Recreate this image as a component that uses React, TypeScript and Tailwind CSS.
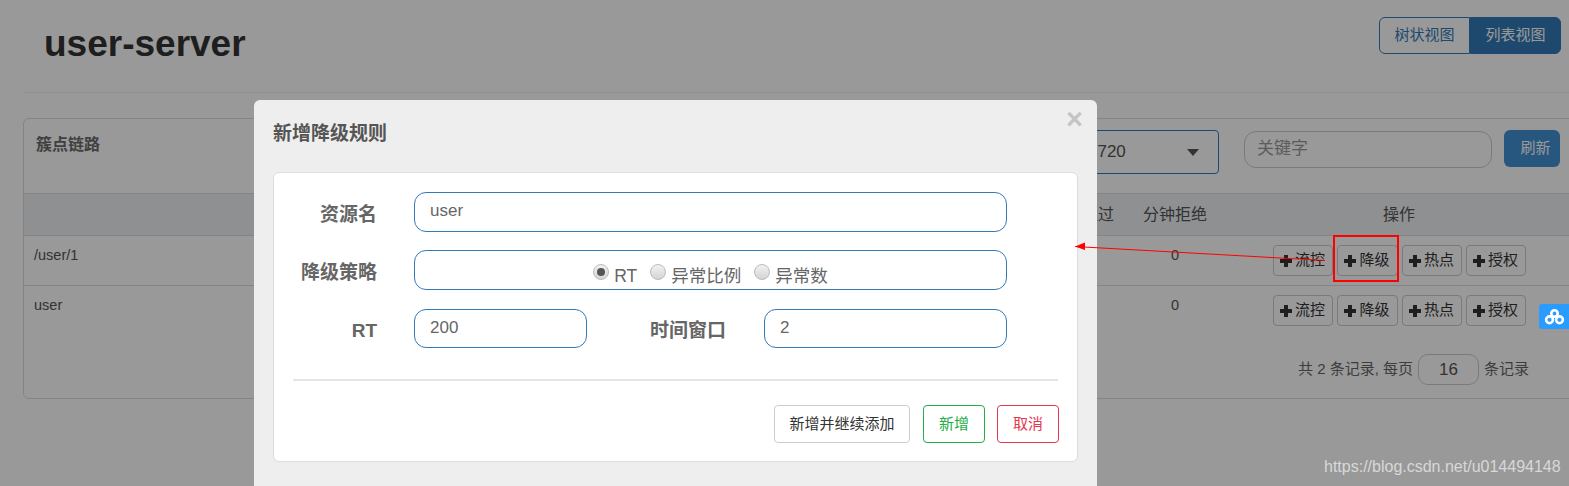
import React from "react";

const fontStack = "font-['Liberation_Sans','Noto_Sans_CJK_SC',sans-serif]";

function PlusGlyph() {
  return (
    <svg viewBox="0.5 0.5 11 11" className="h-[12px] w-[12px] shrink-0" fill="#333">
      <path d="M4.2 0.5h3.6v3.7h3.7v3.6h-3.7v3.7h-3.6v-3.7h-3.7v-3.6h3.7z" />
    </svg>
  );
}

function OpButton({ label, width }: { label: string; width: string }) {
  return (
    <button className={`flex h-[31px] ${width} items-center justify-center gap-[3px] rounded-[4px] border border-[#ccc] bg-white text-[15px] text-[#333]`}>
      <PlusGlyph />
      <span>{label}</span>
    </button>
  );
}

function TableRow({ name, last }: { name: string; last?: boolean }) {
  return (
    <div className={`flex h-[50px] pr-[33px] text-[14.5px] text-[#555] ${last ? "" : "border-b border-[#ddd]"}`}>
      <div className="flex-1 pt-[9px] pl-[10px]">{name}</div>
      <div className="w-[86px] pt-[9px] text-center">0</div>
      <div className="ml-[31px] flex w-[300px] justify-center gap-[4px] pt-[9px]">
        <OpButton label="流控" width="w-[60px]" />
        <OpButton label="降级" width="w-[61px]" />
        <OpButton label="热点" width="w-[60px]" />
        <OpButton label="授权" width="w-[60px]" />
      </div>
    </div>
  );
}

function FormLabel({ children, className }: { children: React.ReactNode; className?: string }) {
  return (
    <label className={`pt-[4px] text-right text-[19px] leading-none font-bold whitespace-nowrap text-[#666] ${className ?? ""}`}>
      {children}
    </label>
  );
}

function Radio({ label, checked }: { label: string; checked?: boolean }) {
  return (
    <span className="flex items-center gap-[5px]">
      <span className="mt-[-8px] flex h-[16px] w-[16px] items-center justify-center rounded-full border border-[#bbb] bg-gradient-to-b from-[#f2f2f2] to-[#d4d4d4]">
        {checked && <span className="h-[8px] w-[8px] rounded-full bg-[#555]" />}
      </span>
      <span>{label}</span>
    </span>
  );
}

function TextField({ value, className }: { value: string; className: string }) {
  return (
    <input
      readOnly
      value={value}
      className={`rounded-[12px] border border-[#337ab7] bg-white px-[15px] text-[17px] text-[#666] outline-none ${className}`}
    />
  );
}

export default function App() {
  return (
    <div className={`relative h-[486px] w-[1569px] overflow-hidden bg-white ${fontStack}`}>
      {/* page behind the modal */}
      <header className="ml-[23px] flex h-[93px] justify-between border-b border-[#eee] pr-[8px] pl-[21px]">
        <h1 className="mt-[21px] text-[37px] leading-[46px] font-bold text-[#333]">user-server</h1>
        <div className="mt-[17px] flex h-[37px] text-[15px]">
          <button className="h-full w-[91px] rounded-l-[6px] border border-[#337ab7] bg-white text-[#337ab7]">树状视图</button>
          <button className="h-full w-[91px] rounded-r-[6px] border border-[#337ab7] bg-[#337ab7] text-white">列表视图</button>
        </div>
      </header>

      <section className="mt-[25px] ml-[23px] h-[281px] w-[1560px] rounded-[6px] border border-[#ddd]">
        <div className="flex h-[75px] justify-between border-b border-[#ddd] pr-[22px] pl-[12px]">
          <h3 className="mt-[16px] text-[16px] leading-[20px] font-bold text-[#6b6b6b]">簇点链路</h3>
          <div className="flex items-start pt-[11px]">
            <div className="flex h-[44px] w-[300px] items-center justify-between rounded-[4px] border border-[#337ab7] pr-[19px] pl-[12px] text-[17px] text-[#555]">
              <span className="pl-[156px]">8720</span>
              <span className="h-0 w-0 border-x-[6px] border-t-[7px] border-x-transparent border-t-[#555]" />
            </div>
            <input
              readOnly
              placeholder="关键字"
              className="mt-[1px] ml-[25px] h-[37px] w-[248px] rounded-[12px] border border-[#ccc] bg-white px-[12px] pb-[1px] text-[17px] outline-none placeholder:text-[#999]"
            />
            <button className="ml-[12px] h-[37px] w-[56px] rounded-[6px] bg-[#4290d4] pl-[7px] text-[15px] text-white">刷新</button>
          </div>
        </div>

        <div className="flex h-[42px] items-center border-b border-[#ddd] bg-[#eff0f3] pr-[33px] text-[16px] text-[#555]">
          <div className="flex-1" />
          <div className="w-[100px] text-center">分钟通过</div>
          <div className="w-[86px] text-center">分钟拒绝</div>
          <div className="ml-[31px] w-[300px] text-center">操作</div>
        </div>

        <TableRow name="/user/1" />
        <TableRow name="user" last />

        <div className="flex items-center justify-end pt-[18px] pr-[53px] text-[15px] text-[#666]">
          <span>共 2 条记录, 每页</span>
          <input
            readOnly
            value="16"
            className="mx-[5px] h-[31px] w-[61px] rounded-[10px] border border-[#ccc] bg-white text-center text-[17px] text-[#555] outline-none"
          />
          <span>条记录</span>
        </div>
      </section>

      {/* backdrop */}
      <div className="absolute inset-0 bg-black/40" />

      {/* modal */}
      <div className="absolute top-[100px] left-[254px] h-[420px] w-[843px] rounded-[6px] bg-[#eee] px-[19px]">
        <div className="relative h-[72px]">
          <h4 className="pt-[24px] text-[19px] leading-[20px] font-bold text-[#555]">新增降级规则</h4>
          <span className="absolute top-[3px] right-[-5px] text-[29px] leading-[32px] font-bold text-[#c4c4c4]">×</span>
        </div>

        <div className="h-[290px] w-[805px] rounded-[6px] border border-[#ddd] bg-white pt-[19px]">
          <div className="flex h-[40px] items-center">
            <FormLabel className="w-[103px]">资源名</FormLabel>
            <TextField value="user" className="ml-[37px] h-[40px] w-[593px] pb-[3px]" />
          </div>

          <div className="mt-[18px] flex h-[40px] items-center">
            <FormLabel className="w-[103px]">降级策略</FormLabel>
            <div className="ml-[37px] flex h-[40px] w-[593px] items-end justify-center gap-[13px] rounded-[12px] border border-[#337ab7] pb-[2px] text-[17.5px] leading-[22px] text-[#666]">
              <Radio label="RT" checked />
              <Radio label="异常比例" />
              <Radio label="异常数" />
            </div>
          </div>

          <div className="mt-[19px] flex h-[39px] items-center">
            <FormLabel className="w-[103px]">RT</FormLabel>
            <TextField value="200" className="ml-[37px] h-[39px] w-[173px] pb-[1px]" />
            <FormLabel className="ml-[63px] w-[76px]">时间窗口</FormLabel>
            <TextField value="2" className="ml-[38px] h-[39px] w-[243px] pb-[1px]" />
          </div>

          <div className="mx-[19px] mt-[31px] h-[2px] bg-[#e5e5e5]" />

          <div className="mt-[24px] flex justify-end gap-[12px] pr-[18px] text-[15px]">
            <button className="mr-[1px] h-[38px] w-[136px] rounded-[4px] border border-[#ccc] bg-white text-[#333]">新增并继续添加</button>
            <button className="h-[38px] w-[62px] rounded-[4px] border border-[#22ad45] bg-white text-[#22ad45]">新增</button>
            <button className="h-[38px] w-[62px] rounded-[4px] border border-[#e5354d] bg-white text-[#e5354d]">取消</button>
          </div>
        </div>
      </div>

      {/* screenshot annotations */}
      <div className="absolute top-[235px] left-[1333px] h-[47px] w-[66px] border-2 border-[#f00]" />
      <svg className="absolute top-[238px] left-[1070px] h-[30px] w-[270px]" viewBox="0 0 270 30" fill="none">
        <path d="M5 8.5L255 22.5" stroke="#f00" strokeWidth="1" />
        <path d="M5 8.5L15 4.5L15 12z" fill="#f00" />
      </svg>

      <div className="absolute top-[304px] left-[1539px] flex h-[25px] w-[30px] items-center justify-center rounded-l-[3px] bg-[#2a9cff]">
        <svg viewBox="0 0 20 16" className="h-[16px] w-[21px]" fill="none" stroke="#fff" strokeWidth="2.6">
          <circle cx="10" cy="4.5" r="3.2" />
          <circle cx="5" cy="10.8" r="3.4" />
          <circle cx="15" cy="10.8" r="3.4" />
        </svg>
      </div>

      <span className="absolute top-[457px] left-[1324px] text-[16px] leading-[20px] text-[#d8d8d8]">https://blog.csdn.net/u014494148</span>
    </div>
  );
}
